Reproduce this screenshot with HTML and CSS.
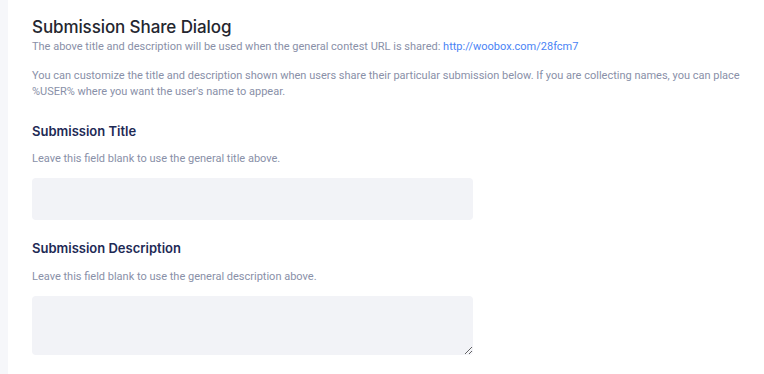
FILE: index.html
```html
<!DOCTYPE html>
<html lang="en">

<head>
    <meta charset="UTF-8">
    <meta name="viewport" content="width=device-width, initial-scale=1.0">
    <title>Submission Share Dialog</title>
    <link rel="stylesheet" href="styles.css">
</head>

<body>
    <div class="side-strip"></div>
    <div class="content">
        <h1 class="section-title">Submission Share Dialog</h1>
        <p class="desc">The above title and description will be used when the general contest URL is shared: <a href="#" class="share-link">http://woobox.com/28fcm7</a></p>
        <p class="desc note">You can customize the title and description shown when users share their particular submission below. If you are collecting names, you can place %USER% where you want the user's name to appear.</p>

        <div class="field">
            <h2 class="field-label">Submission Title</h2>
            <p class="desc hint">Leave this field blank to use the general title above.</p>
            <input type="text" class="field-input">
        </div>

        <div class="field">
            <h2 class="field-label">Submission Description</h2>
            <p class="desc hint">Leave this field blank to use the general description above.</p>
            <textarea class="field-input field-textarea"></textarea>
        </div>
    </div>
</body>

</html>
```

FILE: styles.css
```css
body {
    margin: 0;
    display: flex;
    min-height: 374px;
    background-color: #fff;
    font-family: 'Roboto', sans-serif;
}

.side-strip {
    width: 8px;
    flex-shrink: 0;
    background-color: #f6f7fa;
}

.content {
    flex: 1;
    padding: 15px 20px 0 24px;
}

.section-title {
    font-family: 'Inter', sans-serif;
    font-size: 17px;
    font-weight: 500;
    line-height: 24px;
    letter-spacing: -0.1px;
    color: #24262f;
    margin: 0;
}

.desc {
    font-size: 11px;
    line-height: 16px;
    color: #8990a8;
    margin: 0;
}

.share-link {
    color: #4a83f5;
    text-decoration: none;
}

.note {
    margin-top: 13px;
}

.field-label {
    font-family: 'Inter', sans-serif;
    font-size: 13px;
    font-weight: 600;
    line-height: 18px;
    color: #1e2a55;
    margin: 22px 0 0 0;
}

.field + .field .field-label {
    margin-top: 19px;
}

.hint {
    margin-top: 11px;
}

.field + .field .hint {
    margin-top: 12px;
}

.field-input {
    display: block;
    box-sizing: border-box;
    width: 441px;
    height: 42px;
    margin-top: 11px;
    border: none;
    border-radius: 4px;
    background-color: #f2f3f7;
    font-family: 'Roboto', sans-serif;
    font-size: 13px;
}

.field-textarea {
    height: 59px;
    margin-top: 11px;
}
```
